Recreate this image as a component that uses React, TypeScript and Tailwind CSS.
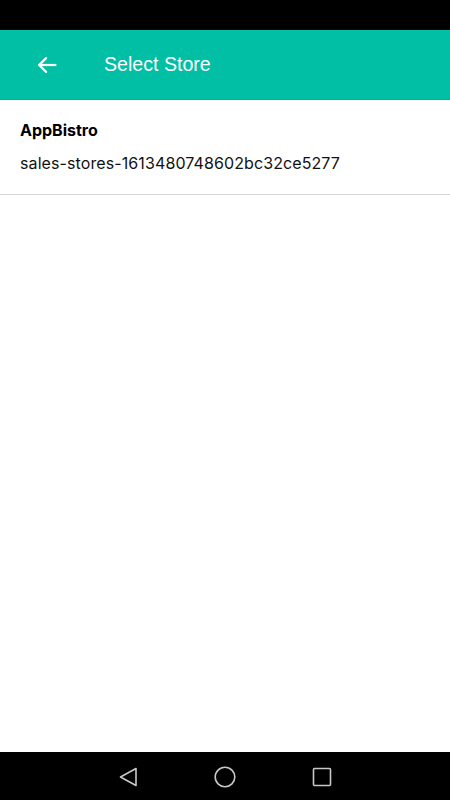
import React from "react";

export default function App() {
  return (
    <div className="w-[450px] h-[800px] flex flex-col bg-white" style={{ fontFamily: "Inter, 'Liberation Sans', sans-serif" }}>
      <div className="h-[30px] bg-black shrink-0" />
      <div className="h-[70px] bg-[#00bfa5] flex items-center shrink-0 border-b border-[#00b096]">
        <div className="w-[104px] pl-[36px] flex items-center">
          <svg width="22" height="22" viewBox="0 0 24 24" fill="none" stroke="white" strokeWidth="2.4" strokeLinecap="square">
            <path d="M21 12H4" />
            <path d="M11 4.5L3.5 12L11 19.5" strokeLinecap="round" strokeLinejoin="miter" />
          </svg>
        </div>
        <span className="text-white text-[19.6px] pt-[1px]" style={{ fontFamily: "'Liberation Sans', Arial, sans-serif" }}>Select Store</span>
      </div>
      <div className="flex flex-col px-5 pt-[18px] pb-[19px] border-b border-[#d6d6d6]">
        <span className="font-bold text-[16px] text-black leading-[24px]">AppBistro</span>
        <span className="text-[16px] text-[#111] leading-[24px] mt-[9px] tracking-[0.1px]">sales-stores-1613480748602bc32ce5277</span>
      </div>
      <div className="flex-1" />
      <div className="h-[48px] bg-black shrink-0 flex items-center justify-center">
        <div className="flex items-center gap-[76px] pt-[2px]">
          <svg width="19" height="20" viewBox="0 0 19 20" fill="none" stroke="#c8c8c8" strokeWidth="1.6" strokeLinejoin="round">
            <path d="M17 1.5L1.5 10L17 18.5Z" />
          </svg>
          <svg width="22" height="22" viewBox="0 0 22 22" fill="none" stroke="#c8c8c8" strokeWidth="1.6">
            <circle cx="11" cy="11" r="9.8" />
          </svg>
          <svg width="20" height="20" viewBox="0 0 20 20" fill="none" stroke="#c8c8c8" strokeWidth="1.6" strokeLinejoin="round">
            <rect x="1.5" y="1.5" width="17" height="17" rx="1" />
          </svg>
        </div>
      </div>
    </div>
  );
}
